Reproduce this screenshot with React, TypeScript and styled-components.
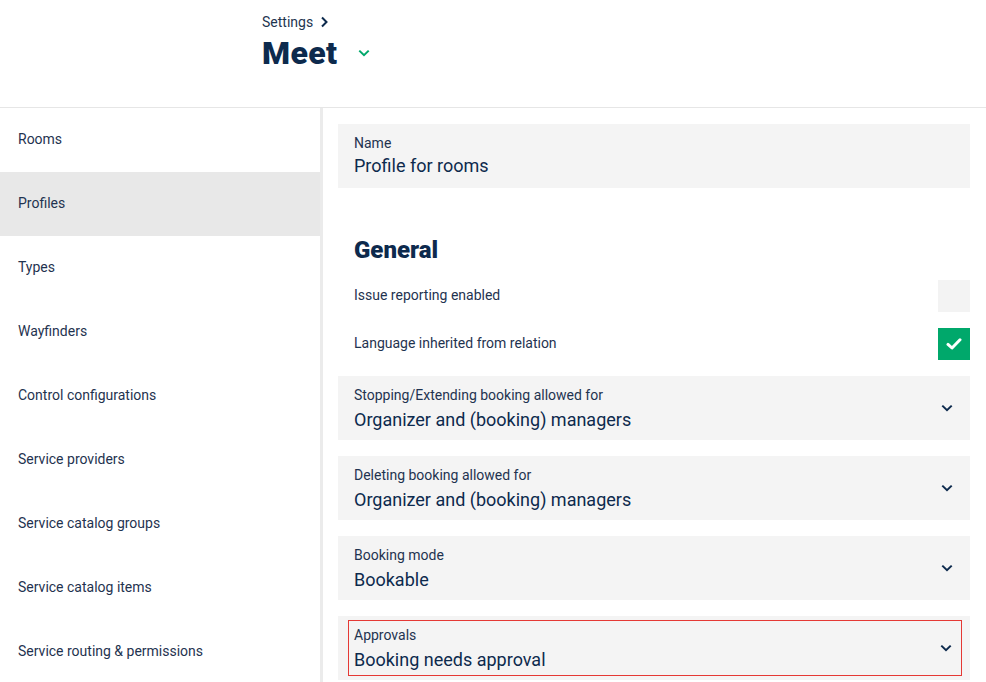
import React from "react";
import styled, { createGlobalStyle } from "styled-components";

const Global = createGlobalStyle`
  html, body { margin: 0; padding: 0; background: #fff; }
  body { font-family: Roboto, "Liberation Sans", sans-serif; color: #0d2a4d; }
  * { box-sizing: border-box; }
`;

const Page = styled.div`
  width: 986px;
  height: 682px;
  overflow: hidden;
  display: flex;
  flex-direction: column;
`;

const Header = styled.header`
  height: 108px;
  flex: none;
  border-bottom: 1px solid #e6e6e6;
  padding: 13px 0 0 262px;
`;

const Crumb = styled.div`
  display: flex;
  align-items: center;
  gap: 6px;
  font-size: 14px;
  color: #1e3550;
  height: 18px;
`;

const TitleRow = styled.div`
  display: flex;
  align-items: center;
  gap: 19px;
  margin-top: 2px;
`;

const Title = styled.h1`
  margin: 0;
  font-size: 32px;
  font-weight: 900;
  color: #0d2a4d;
  line-height: 40px;
  letter-spacing: 0.4px;
`;

const Body = styled.div`
  flex: 1;
  display: flex;
  min-height: 0;
`;

const Sidebar = styled.nav`
  width: 323px;
  flex: none;
  border-right: 3px solid #ebebeb;
  display: flex;
  flex-direction: column;
`;

const NavItem = styled.div<{ $active?: boolean }>`
  height: 64px;
  flex: none;
  display: flex;
  align-items: center;
  padding: 0 0 2px 18px;
  font-size: 14px;
  color: #1f3350;
  background: ${(p) => (p.$active ? "#e8e8e8" : "transparent")};
`;

const Content = styled.main`
  flex: 1;
  padding: 16px 16px 0 15px;
  display: flex;
  flex-direction: column;
`;

const Field = styled.div<{ $error?: boolean }>`
  height: 64px;
  flex: none;
  background: #f4f4f4;
  padding: ${(p) => (p.$error ? "4px 8px 4px 10px" : "0")};
  margin-bottom: 16px;
`;

const FieldInner = styled.div<{ $error?: boolean }>`
  height: 100%;
  display: flex;
  align-items: center;
  justify-content: space-between;
  padding: ${(p) => (p.$error ? "0 8px 0 5px" : "0 16px")};
  border: ${(p) => (p.$error ? "1px solid #e53935" : "none")};
`;

const FieldText = styled.div<{ $inset?: boolean }>`
  align-self: flex-start;
  display: flex;
  flex-direction: column;
  padding-top: ${(p) => (p.$inset ? "5px" : "10px")};
`;

const Label = styled.div`
  font-size: 14px;
  color: #1f3350;
  line-height: 18px;
`;

const Value = styled.div<{ $select?: boolean }>`
  font-size: 18px;
  color: #0d2a4d;
  line-height: 26px;
  margin-top: ${(p) => (p.$select ? "3px" : "1px")};
`;

const Section = styled.h2`
  flex: none;
  margin: 30px 0 0 16px;
  font-size: 24px;
  font-weight: 900;
  color: #0d2a4d;
  line-height: 32px;
`;

const CheckList = styled.div`
  flex: none;
  display: flex;
  flex-direction: column;
  gap: 16px;
  margin: 14px 0 16px;
`;

const CheckRow = styled.div`
  display: flex;
  align-items: center;
  justify-content: space-between;
  padding: 0 0 2px 16px;
  height: 32px;
  font-size: 14px;
  color: #1f3350;
`;

const CheckBox = styled.div<{ $on?: boolean }>`
  width: 32px;
  height: 32px;
  margin-bottom: -2px;
  background: ${(p) => (p.$on ? "#00a86b" : "#f3f3f3")};
  display: flex;
  align-items: center;
  justify-content: center;
`;

const Chevron = ({ color = "#0d2a4d", size = 14 }: { color?: string; size?: number }) => (
  <svg width={size} height={size} viewBox="0 0 14 14" fill="none">
    <path d="M2.3 4.6 L7 9.2 L11.7 4.6" stroke={color} strokeWidth="2" />
  </svg>
);

const ChevronRight = () => (
  <svg width="10" height="12" viewBox="0 0 10 12" fill="none">
    <path d="M3 1.5 L7.5 6 L3 10.5" stroke="#0d2a4d" strokeWidth="2" />
  </svg>
);

const Check = () => (
  <svg width="16" height="14" viewBox="0 0 16 14" fill="none">
    <path d="M2 7.4 L6 11 L14 2.8" stroke="#fff" strokeWidth="3" strokeLinecap="round" strokeLinejoin="round" />
  </svg>
);

const navItems = [
  "Rooms",
  "Profiles",
  "Types",
  "Wayfinders",
  "Control configurations",
  "Service providers",
  "Service catalog groups",
  "Service catalog items",
  "Service routing & permissions",
];

const selects = [
  { label: "Stopping/Extending booking allowed for", value: "Organizer and (booking) managers" },
  { label: "Deleting booking allowed for", value: "Organizer and (booking) managers" },
  { label: "Booking mode", value: "Bookable" },
  { label: "Approvals", value: "Booking needs approval", error: true },
];

export default function App() {
  return (
    <Page>
      <Global />
      <Header>
        <Crumb>
          Settings <ChevronRight />
        </Crumb>
        <TitleRow>
          <Title>Meet</Title>
          <Chevron color="#00a86b" size={14} />
        </TitleRow>
      </Header>
      <Body>
        <Sidebar>
          {navItems.map((n) => (
            <NavItem key={n} $active={n === "Profiles"}>
              {n}
            </NavItem>
          ))}
        </Sidebar>
        <Content>
          <Field>
            <FieldInner>
              <FieldText>
                <Label>Name</Label>
                <Value>Profile for rooms</Value>
              </FieldText>
            </FieldInner>
          </Field>
          <Section>General</Section>
          <CheckList>
            <CheckRow>
              Issue reporting enabled
              <CheckBox />
            </CheckRow>
            <CheckRow>
              Language inherited from relation
              <CheckBox $on>
                <Check />
              </CheckBox>
            </CheckRow>
          </CheckList>
          {selects.map((s) => (
            <Field key={s.label} $error={s.error}>
              <FieldInner $error={s.error}>
                <FieldText $inset={s.error}>
                  <Label>{s.label}</Label>
                  <Value $select>{s.value}</Value>
                </FieldText>
                <Chevron />
              </FieldInner>
            </Field>
          ))}
        </Content>
      </Body>
    </Page>
  );
}
